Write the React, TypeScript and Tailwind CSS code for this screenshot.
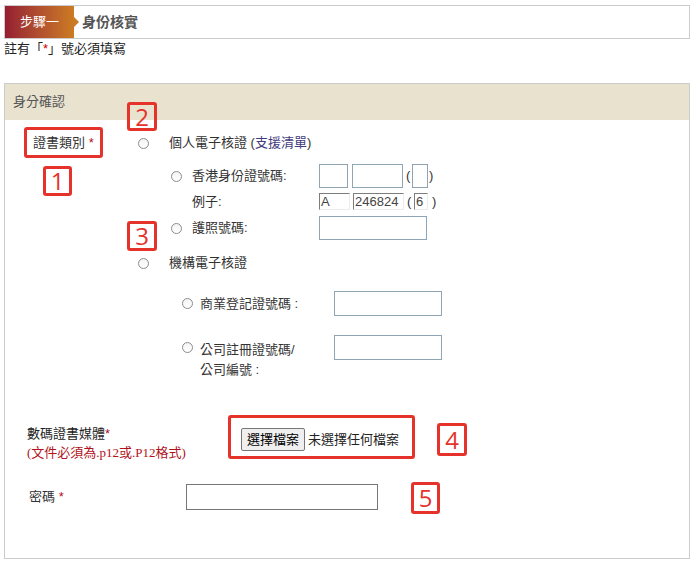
import React from "react";

const Radio = ({ className = "" }: { className?: string }) => (
  <span
    className={`inline-block shrink-0 w-[11px] h-[11px] rounded-full border border-[#8c8c8c] bg-linear-to-b from-[#f4f4f4] to-white ${className}`}
  />
);

const BlueInput = ({ w, h }: { w: string; h: string }) => (
  <span className={`inline-block shrink-0 border border-[#8fa5b4] bg-white ${w} ${h}`} />
);

const ExInput = ({ w, text }: { w: string; text: string }) => (
  <span
    className={`inline-block shrink-0 h-[17px] border border-t-[#7d7d7d] border-l-[#7d7d7d] border-r-[#ececec] border-b-[#ececec] bg-white pl-[1px] text-[13px] leading-[15px] text-[#444] ${w}`}
  >
    {text}
  </span>
);

const Note = ({ className, n }: { className: string; n: string }) => (
  <div
    className={`absolute border-[3px] border-[#e5332c] rounded-[3px] flex items-center justify-center text-[#e5332c] text-[24px] leading-none font-['Open_Sans',sans-serif] ${className}`}
  >
    {n}
  </div>
);

const Star = () => <span className="text-[#b0121b]">*</span>;

export default function App() {
  return (
    <div className="relative w-[699px] h-[570px] bg-white overflow-hidden text-[13px] text-[#333] font-['Liberation_Sans','Noto_Sans_CJK_TC',sans-serif]">
      {/* Step header */}
      <div className="ml-[4px] mt-[5px] w-[686px] h-[34px] border border-[#cccccc] flex items-stretch">
        <div className="relative w-[69px] bg-linear-to-r from-[#951d30] to-[#cc7b22] flex items-center justify-center text-white text-[13px]">
          步驟一
          <span className="absolute right-[-5px] top-1/2 -translate-y-1/2 w-0 h-0 border-y-[5px] border-y-transparent border-l-[5px] border-l-[#cc7b22]" />
        </div>
        <div className="pl-[8px] flex items-center font-bold text-[14px] text-[#555]">身份核實</div>
      </div>
      <div className="ml-[4px] leading-[18px] mt-[1px] text-[#222]">
        註有「<span className="text-[#c00]">*</span>」號必須填寫
      </div>

      {/* Panel */}
      <div className="ml-[4px] mt-[25px] w-[686px] h-[476px] border border-[#cccccc]">
        <div className="h-[36px] bg-[#e8e2cf] pl-[8px] flex items-center text-[#555]">身分確認</div>

        {/* r1 */}
        <div className="mt-[13px] h-[20px] flex items-center">
          <div className="w-[133px] pl-[28px]">
            證書類別 <Star />
          </div>
          <Radio />
          <div className="ml-[20px]">
            個人電子核證 (<span className="text-[#453c80]">支援清單</span>)
          </div>
        </div>

        {/* r2 HKID */}
        <div className="mt-[11px] h-[24px] flex items-center pl-[166px]">
          <Radio />
          <div className="ml-[10px] w-[127px]">香港身份證號碼:</div>
          <BlueInput w="w-[29px]" h="h-[24px]" />
          <span className="w-[4px]" />
          <BlueInput w="w-[51px]" h="h-[24px]" />
          <span className="ml-[3px] w-[6px]">(</span>
          <BlueInput w="w-[16px]" h="h-[24px]" />
          <span className="ml-[1px]">)</span>
        </div>

        {/* r3 example */}
        <div className="mt-[5px] h-[17px] flex items-center pl-[187px]">
          <div className="w-[127px]">例子:</div>
          <ExInput w="w-[31px]" text="A" />
          <span className="w-[3px]" />
          <ExInput w="w-[51px]" text="246824" />
          <span className="ml-[3px] w-[7px]">(</span>
          <ExInput w="w-[14px]" text="6" />
          <span className="ml-[4px]">)</span>
        </div>

        {/* r4 passport */}
        <div className="mt-[6px] h-[24px] flex items-center pl-[166px]">
          <Radio />
          <div className="ml-[10px] w-[127px]">護照號碼:</div>
          <BlueInput w="w-[108px]" h="h-[24px]" />
        </div>

        {/* r5 */}
        <div className="mt-[13px] h-[20px] flex items-center pl-[133px]">
          <Radio />
          <div className="ml-[20px]">機構電子核證</div>
        </div>

        {/* r6 */}
        <div className="mt-[18px] h-[25px] flex items-center pl-[177px]">
          <Radio className="-mt-[1px]" />
          <div className="ml-[7px] w-[134px]">商業登記證號碼 :</div>
          <BlueInput w="w-[108px]" h="h-[25px]" />
        </div>

        {/* r7 */}
        <div className="mt-[19px] flex items-start pl-[177px]">
          <Radio className="mt-[7px]" />
          <div className="ml-[7px] w-[134px] mt-[5px] leading-[20px]">
            公司註冊證號碼/
            <br />
            公司編號 :
          </div>
          <BlueInput w="w-[108px]" h="h-[25px]" />
        </div>

        {/* file row */}
        <div className="mt-[44px] flex items-start">
          <div className="w-[236px] pl-[22px] leading-[19px]">
            <div className="text-[#222]">
              數碼證書媒體<Star />
            </div>
            <div className="text-[#b0121b] font-['Liberation_Serif','Noto_Sans_CJK_TC',serif]">(文件必須為.p12或.P12格式)</div>
          </div>
          <div className="mt-[4px] flex items-center">
            <span className="w-[64px] h-[23px] flex items-center justify-center bg-[#efefef] border border-[#767676] rounded-[2px] text-black">
              選擇檔案
            </span>
            <span className="ml-[3px] text-[#222]">未選擇任何檔案</span>
          </div>
        </div>

        {/* password row */}
        <div className="mt-[22px] h-[26px] flex items-center">
          <div className="w-[181px] pl-[24px]">
            密碼 <Star />
          </div>
          <span className="w-[192px] h-[26px] border border-[#767676] bg-white" />
        </div>
      </div>

      {/* annotations */}
      <div className="absolute left-[24px] top-[127px] w-[79px] h-[31px] border-[3px] border-[#e5332c] rounded-[3px]" />
      <Note className="left-[43px] top-[166px] w-[29px] h-[30px]" n="1" />
      <Note className="left-[127px] top-[102px] w-[30px] h-[29px]" n="2" />
      <Note className="left-[127px] top-[221px] w-[30px] h-[30px]" n="3" />
      <div className="absolute left-[228px] top-[415px] w-[187px] h-[44px] border-[3px] border-[#e5332c] rounded-[3px]" />
      <Note className="left-[437px] top-[423px] w-[30px] h-[33px]" n="4" />
      <Note className="left-[411px] top-[482px] w-[29px] h-[32px]" n="5" />
    </div>
  );
}
